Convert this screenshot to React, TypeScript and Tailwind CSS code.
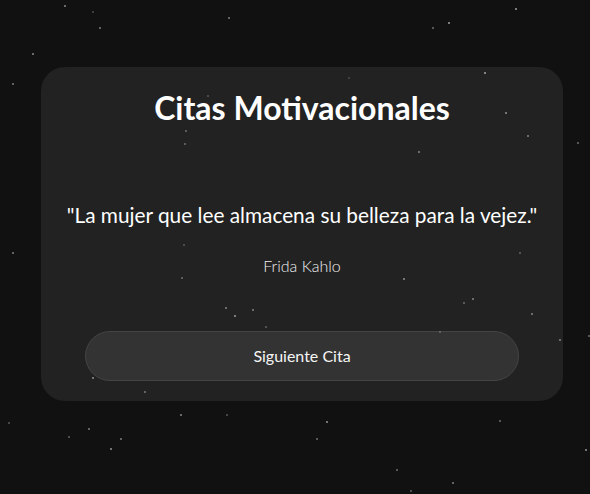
const stars: [number, number, number][] = [
  [64, 5, 0.5], [92, 11, 0.25], [99, 27, 0.45], [228, 17, 0.45], [32, 53, 0.5], [12, 83, 0.45],
  [207, 95, 0.25], [185, 130, 0.35], [184, 143, 0.35], [183, 244, 0.25],
  [515, 8, 0.6], [432, 27, 0.4], [448, 22, 0.6], [484, 72, 0.6], [348, 77, 0.2],
  [505, 112, 0.5], [527, 135, 0.45], [577, 142, 0.4], [418, 151, 0.45],
  [12, 252, 0.45], [181, 277, 0.35], [225, 307, 0.45], [234, 315, 0.55], [252, 309, 0.45],
  [265, 326, 0.3], [92, 377, 0.5], [144, 391, 0.4], [180, 414, 0.5], [226, 414, 0.3],
  [8, 422, 0.3], [88, 428, 0.45], [68, 436, 0.35], [120, 438, 0.45], [110, 448, 0.55],
  [519, 252, 0.3], [403, 278, 0.5], [463, 302, 0.35], [472, 298, 0.45], [531, 313, 0.45],
  [559, 339, 0.45], [588, 335, 0.4], [439, 331, 0.25], [326, 421, 0.55], [316, 438, 0.4],
  [499, 420, 0.4], [585, 449, 0.55], [396, 469, 0.4], [452, 482, 0.45], [410, 490, 0.35],
]

export default function App() {
  return (
    <div
      className="relative w-full min-h-screen bg-[#111111] overflow-hidden pl-[41px] pt-[67px]"
      style={{ fontFamily: 'Lato, "Noto Sans", sans-serif' }}
    >
      {/* Card */}
      <div className="w-[522px] h-[334px] bg-[#222222] rounded-[24px] px-[44px] pt-[21px] flex flex-col items-center">
        <h1 className="text-[32px] leading-[40px] font-bold text-white">Citas Motivacionales</h1>
        <p className="mt-[73px] text-[20.8px] leading-[28px] text-white whitespace-nowrap">
          "La mujer que lee almacena su belleza para la vejez."
        </p>
        <p className="mt-[26px] text-[16px] leading-[22px] font-light text-[#f0f0f0]">Frida Kahlo</p>
        <button className="mt-[54px] w-full h-[50px] rounded-full bg-[#333333] border border-[#444444] text-[#f5f5f5] text-[16px] font-normal">
          Siguiente Cita
        </button>
      </div>

      {/* Stars */}
      <div className="pointer-events-none absolute inset-0">
        {stars.map(([x, y, o], i) => (
          <div
            key={i}
            className="absolute w-[2px] h-[2px] rounded-full bg-white"
            style={{ left: x, top: y, opacity: o }}
          />
        ))}
      </div>
    </div>
  )
}
